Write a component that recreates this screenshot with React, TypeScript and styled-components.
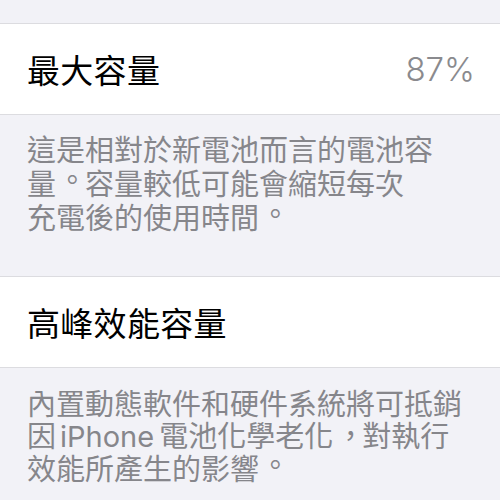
import styled, { createGlobalStyle } from "styled-components";

const GlobalStyle = createGlobalStyle`
  html, body {
    margin: 0;
    padding: 0;
    background: #f2f2f7;
  }
  body {
    font-family: Inter, "Noto Sans CJK TC", sans-serif;
    -webkit-font-smoothing: antialiased;
  }
`;

export const Screen = styled.div`
  width: 500px;
  height: 500px;
  overflow: hidden;
  background: #f2f2f7;
  display: flex;
  flex-direction: column;
`;

export const Gap = styled.div<{ h: number }>`
  height: ${(p) => p.h}px;
  flex-shrink: 0;
`;

export const Cell = styled.div`
  height: 90px;
  flex-shrink: 0;
  background: #ffffff;
  border-top: 1px solid #dcdce0;
  border-bottom: 1px solid #dcdce0;
  display: flex;
  align-items: center;
  justify-content: space-between;
  padding: 0 27px;
`;

export const Label = styled.span`
  font-size: 33px;
  color: #000000;
  letter-spacing: 0.3px;
`;

export const Value = styled.span`
  font-size: 33px;
  font-weight: 300;
  color: #8a8a8e;
  margin-right: -2px;
`;

export const Footer = styled.div<{ h: number; lh: number; pt: number }>`
  height: ${(p) => p.h}px;
  flex-shrink: 0;
  padding: ${(p) => p.pt}px 27px 0;
  box-sizing: border-box;
  font-family: "Noto Sans CJK TC", sans-serif;
  font-size: 29px;
  line-height: ${(p) => p.lh}px;
  color: #86868b;
`;

export const Line = styled.div`
  white-space: nowrap;
`;

export const Latin = styled.span`
  font-family: Inter, sans-serif;
  margin: 0 5px 0 4px;
`;

/* Taiwan-style punctuation: full stop centred in its em box, comma centred horizontally */
export const Punct = styled.span<{ kind: "stop" | "comma" }>`
  display: inline-block;
  width: 1em;
  text-spacing-trim: space-all;
  transform: ${(p) =>
    p.kind === "stop" ? "translate(0.06em, -0.14em)" : "translate(0.1em, 0)"};
`;

function App() {
  return (
    <Screen lang="zh-TW">
      <GlobalStyle />
      <Gap h={23} />
      <Cell>
        <Label>最大容量</Label>
        <Value>87%</Value>
      </Cell>
      <Footer h={161} lh={34} pt={16}>
        <Line>這是相對於新電池而言的電池容</Line>
        <Line>
          量<Punct kind="stop">。</Punct>容量較低可能會縮短每次
        </Line>
        <Line>
          充電後的使用時間<Punct kind="stop">。</Punct>
        </Line>
      </Footer>
      <Cell>
        <Label>高峰效能容量</Label>
      </Cell>
      <Footer h={140} lh={31.5} pt={19}>
        <Line>內置動態軟件和硬件系統將可抵銷</Line>
        <Line>
          因<Latin>iPhone</Latin>電池化學老化<Punct kind="comma">，</Punct>對執行
        </Line>
        <Line>
          效能所產生的影響<Punct kind="stop">。</Punct>
        </Line>
      </Footer>
    </Screen>
  );
}

export default App;
